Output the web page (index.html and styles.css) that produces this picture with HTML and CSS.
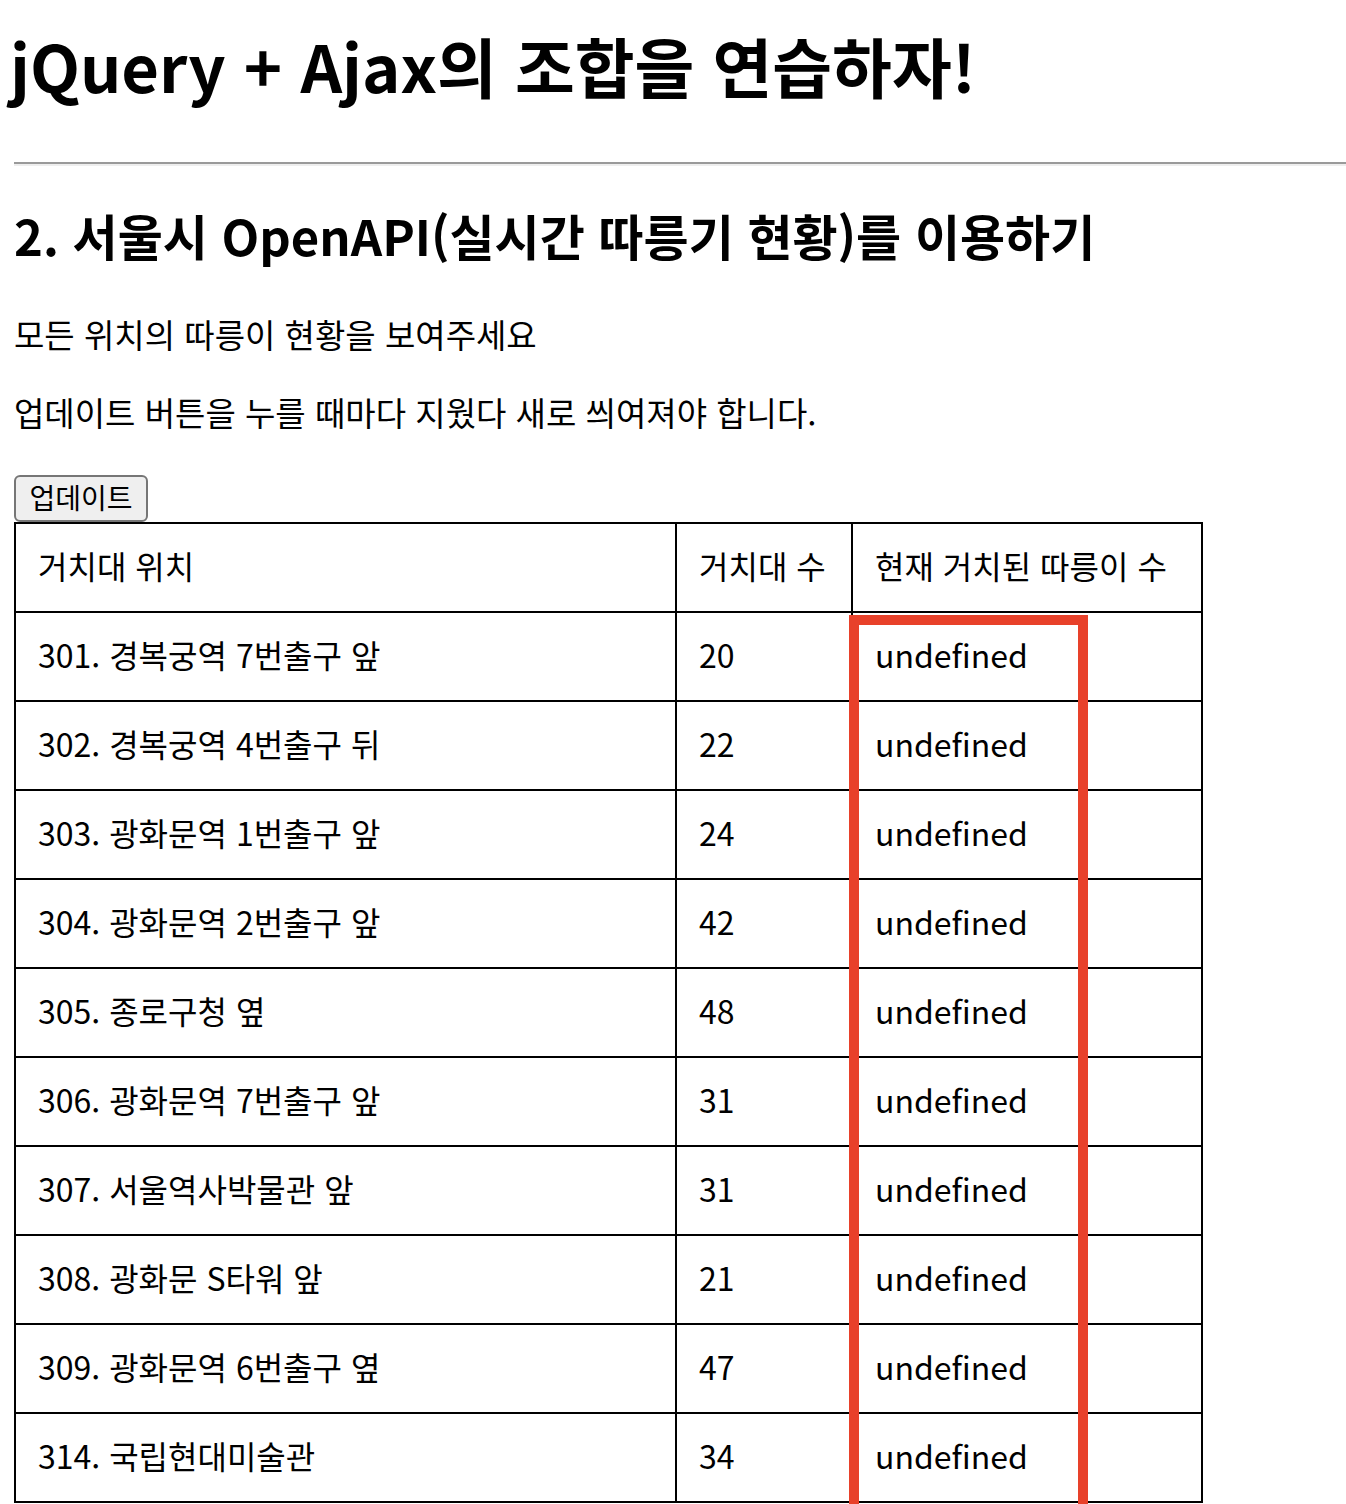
FILE: index.html
```html
<!DOCTYPE html>
<html lang="ko">
<head>
<meta charset="utf-8">
<title>jQuery + Ajax</title>
<link rel="stylesheet" href="styles.css">
</head>
<body>
<h1 class="title">jQuery + Ajax의 조합을 연습하자!</h1>
<hr class="divider">
<h2 class="subtitle">2. 서울시 OpenAPI(실시간 따릉기 현황)를 이용하기</h2>
<p class="desc">모든 위치의 따릉이 현황을 보여주세요</p>
<p class="desc">업데이트 버튼을 누를 때마다 지웠다 새로 씌여져야 합니다.</p>
<button class="update-btn">업데이트</button>
<div class="table-wrap">
<table class="bike-table">
<colgroup>
<col class="c1">
<col class="c2">
<col class="c3">
</colgroup>
<thead>
<tr><td>거치대 위치</td><td>거치대 수</td><td>현재 거치된 따릉이 수</td></tr>
</thead>
<tbody>
<tr><td>301. 경복궁역 7번출구 앞</td><td>20</td><td>undefined</td></tr>
<tr><td>302. 경복궁역 4번출구 뒤</td><td>22</td><td>undefined</td></tr>
<tr><td>303. 광화문역 1번출구 앞</td><td>24</td><td>undefined</td></tr>
<tr><td>304. 광화문역 2번출구 앞</td><td>42</td><td>undefined</td></tr>
<tr><td>305. 종로구청 옆</td><td>48</td><td>undefined</td></tr>
<tr><td>306. 광화문역 7번출구 앞</td><td>31</td><td>undefined</td></tr>
<tr><td>307. 서울역사박물관 앞</td><td>31</td><td>undefined</td></tr>
<tr><td>308. 광화문 S타워 앞</td><td>21</td><td>undefined</td></tr>
<tr><td>309. 광화문역 6번출구 옆</td><td>47</td><td>undefined</td></tr>
<tr><td>314. 국립현대미술관</td><td>34</td><td>undefined</td></tr>
</tbody>
</table>
<div class="highlight"></div>
</div>
</body>
</html>
```
FILE: styles.css
```css
html, body {
  margin: 0;
  padding: 0;
  background: #fff;
}
body {
  padding: 0 0 0 14px;
  font-family: "Noto Sans CJK KR", "Noto Sans", sans-serif;
  color: #000;
  height: 1504px;
  overflow: hidden;
}
.title {
  margin: 0 0 0 -4px;
  padding-top: 20px;
  font-size: 65px;
  line-height: 90px;
  font-weight: 700;
}
.divider {
  margin: 52px 0 0 0;
  border: 0;
  border-top: 2px solid #9a9a9a;
  border-bottom: 2px solid #eeeeee;
  height: 0;
}
.subtitle {
  margin: 34px 0 0 0;
  font-size: 49px;
  line-height: 70px;
  font-weight: 700;
}
.desc {
  margin: 44px 0 0 0;
  font-size: 33px;
  line-height: 40px;
}
.desc + .desc {
  margin-top: 38px;
}
.update-btn {
  display: block;
  margin-top: 43px;
  width: 134px;
  height: 47px;
  padding: 0 0 4px 0;
  font-family: "Noto Sans CJK KR", sans-serif;
  font-size: 28px;
  line-height: 40px;
  color: #000;
  background: #efefef;
  border: 2px solid #767676;
  border-radius: 6px;
}
.table-wrap {
  position: relative;
  width: 1187px;
}
.bike-table {
  border-collapse: collapse;
  width: 1187px;
  table-layout: fixed;
}
.bike-table .c1 { width: 661px; }
.bike-table .c2 { width: 176px; }
.bike-table .c3 { width: 350px; }
.bike-table td {
  border: 2px solid #000;
  height: 82px;
  padding: 0 22px 5px 22px;
  font-size: 32px;
  line-height: 40px;
  vertical-align: middle;
  white-space: nowrap;
}
.highlight {
  position: absolute;
  left: 835px;
  top: 93px;
  width: 219px;
  height: 900px;
  border: 10px solid #e8412a;
}
```
